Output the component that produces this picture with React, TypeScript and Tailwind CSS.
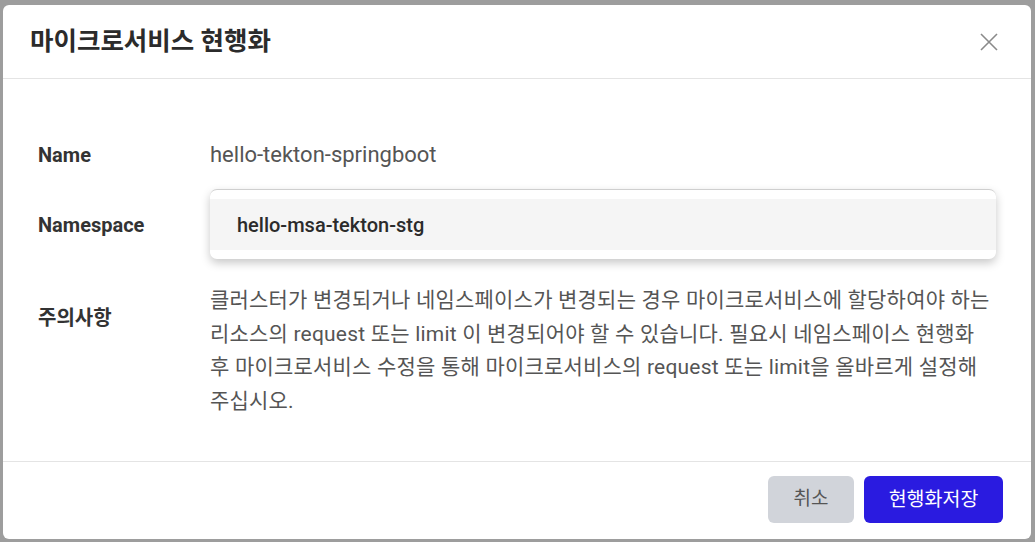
import React from "react";

const font = { fontFamily: 'Roboto, "Noto Sans CJK KR", sans-serif' };

export const MigrateDialog: React.FC = () => {
  return (
    <div className="h-[542px] w-full bg-[#9d9d9d] pt-[5px] pl-[3px] pr-[4px] pb-[3px]" style={font}>
      <div className="flex h-full flex-col rounded-[6px] bg-white">
        {/* header */}
        <div className="flex h-[74px] shrink-0 items-center justify-between border-b border-[#e4e4e4] pl-[27px] pr-[30px]">
          <h2 className="text-[25.5px] font-semibold text-[#2b2b2b]">마이크로서비스 현행화</h2>
          <button className="flex h-[24px] w-[24px] items-center justify-center text-[#8a8a8a]">
            <svg width="20" height="20" viewBox="0 0 20 20" fill="none" stroke="currentColor" strokeWidth="1.6">
              <path d="M2 2 L18 18 M18 2 L2 18" />
            </svg>
          </button>
        </div>

        {/* body */}
        <div className="flex-1 pl-[35px] pr-[35px] pt-[59px]">
          <div className="grid grid-cols-[172px_1fr] items-center">
            <div className="text-[20px] font-bold text-[#333]">Name</div>
            <div className="text-[22px] text-[#555]">hello-tekton-springboot</div>
          </div>

          <div className="mt-[18px] grid grid-cols-[172px_1fr] items-center">
            <div className="pt-[1px] text-[20px] font-bold text-[#333]">Namespace</div>
            <div className="rounded-[7px] border-t border-[#cfcfcf] bg-white py-[9px] shadow-[0_4px_10px_rgba(0,0,0,0.22)]">
              <div className="flex h-[51px] items-center bg-[#f5f5f5] px-[27px] text-[20px] font-medium text-[#2b2b2b]">
                hello-msa-tekton-stg
              </div>
            </div>
          </div>

          <div className="mt-[25px] grid grid-cols-[172px_1fr] items-start">
            <div className="pt-[19px] text-[20px] font-bold text-[#333]">주의사항</div>
            <p className="text-[21px] leading-[33.5px] tracking-[0.2px] whitespace-nowrap text-[#555]">
              <span className="block">클러스터가 변경되거나 네임스페이스가 변경되는 경우 마이크로서비스에 할당하여야 하는</span>
              <span className="block">리소스의 request 또는 limit 이 변경되어야 할 수 있습니다. 필요시 네임스페이스 현행화</span>
              <span className="block">후 마이크로서비스 수정을 통해 마이크로서비스의 request 또는 limit을 올바르게 설정해</span>
              <span className="block">주십시오.</span>
            </p>
          </div>
        </div>

        {/* footer */}
        <div className="flex shrink-0 justify-end gap-[10px] border-t border-[#e4e4e4] pb-[16px] pr-[28px] pt-[14px]">
          <button className="h-[47px] w-[86px] rounded-[6px] bg-[#d1d4da] text-[19px] text-[#555]">취소</button>
          <button className="h-[47px] w-[139px] rounded-[6px] bg-[#2a1be0] text-[19.5px] text-white">현행화저장</button>
        </div>
      </div>
    </div>
  );
};

export default function App() {
  return <MigrateDialog />;
}
